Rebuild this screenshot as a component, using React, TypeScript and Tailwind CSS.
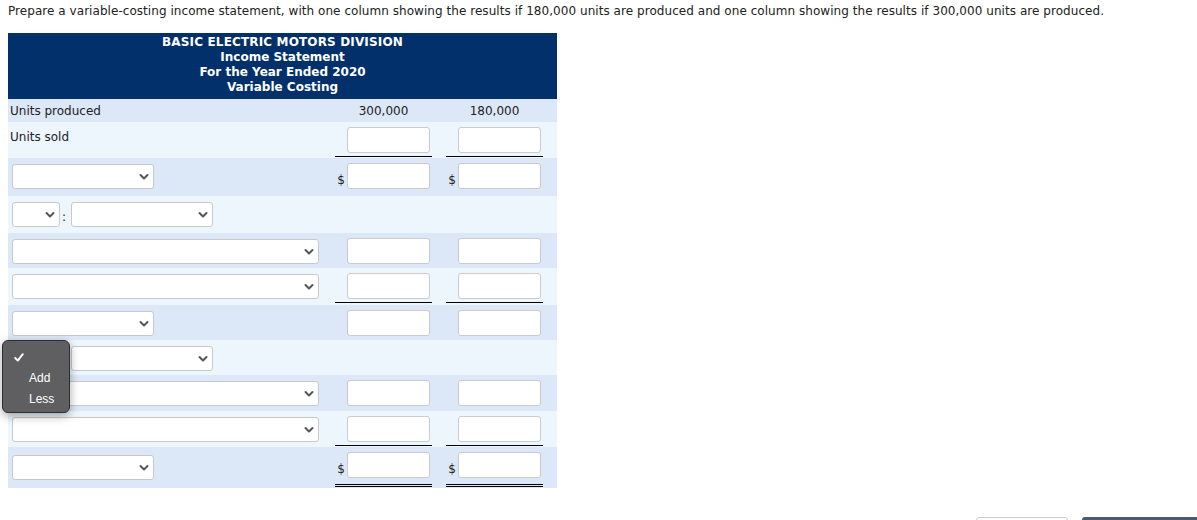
import React from "react";

type Line = "none" | "single" | "double";

function Chevron() {
  return (
    <svg width="10" height="7" viewBox="0 0 10 7" className="absolute right-[4px] top-1/2 -translate-y-1/2">
      <path d="M1.5 1.5 L5 5 L8.5 1.5" fill="none" stroke="#555" strokeWidth="2" strokeLinecap="round" strokeLinejoin="round" />
    </svg>
  );
}

function Select({ w }: { w: string }) {
  return (
    <div className={`relative h-[25px] mt-[1px] bg-white border border-[#c9c9c9] rounded-[3px] ${w}`}>
      <Chevron />
    </div>
  );
}

function Amount({ dollar, line = "none" }: { dollar?: boolean; line?: Line }) {
  const lineCls =
    line === "single"
      ? "border-b border-black pb-[3px]"
      : line === "double"
      ? "border-b-[3px] border-double border-black pb-[6px]"
      : "";
  return (
    <div className={`w-[97px] flex items-end justify-end pr-[2px] ${lineCls}`}>
      {dollar && <span className="mr-[2px] leading-[18px]">$</span>}
      <div className="w-[83px] h-[26px] bg-white border border-[#cbcbcb] rounded-[3px]" />
    </div>
  );
}

function Row({
  dark,
  label,
  amounts,
  dollar,
  line,
  h = "h-[36px]",
  top,
  children,
}: {
  dark?: boolean;
  label?: React.ReactNode;
  amounts?: boolean;
  dollar?: boolean;
  line?: Line;
  h?: string;
  top?: boolean;
  children?: React.ReactNode;
}) {
  return (
    <div
      className={`relative grid grid-cols-[327px_111px_111px] pt-[5px] ${h} ${top ? "z-10" : ""} ${
        dark ? "bg-[#dce8f7]" : "bg-[#edf5fd]"
      }`}
    >
      <div className="pl-[4px] flex items-start">
        {label ? <span className="-ml-[2px] leading-[21px]">{label}</span> : children}
      </div>
      <div>{amounts && <Amount dollar={dollar} line={line} />}</div>
      <div>{amounts && <Amount dollar={dollar} line={line} />}</div>
    </div>
  );
}

function Pair() {
  return (
    <div className="flex items-start">
      <Select w="w-[48px]" />
      <span className="w-[11px] pl-[2px] leading-[32px]">:</span>
      <Select w="w-[142px]" />
    </div>
  );
}

export default function App() {
  return (
    <div className="bg-white min-h-[520px] text-[12px] text-[#222]" style={{ fontFamily: '"DejaVu Sans", Verdana, sans-serif' }}>
      <div className="pl-[8px] pt-[4px]">
        <p className="leading-[15px] tracking-[0.05px]">
          Prepare a variable-costing income statement, with one column showing the results if 180,000 units are produced and one column showing the results if 300,000 units are produced.
        </p>

        <div className="mt-[14px] w-[549px]">
          <div className="bg-[#01306a] text-white font-bold text-center leading-[15px] pt-[2px] pb-[4px]">
            <div className="tracking-[0.15px]">BASIC ELECTRIC MOTORS DIVISION</div>
            <div>Income Statement</div>
            <div>For the Year Ended 2020</div>
            <div>Variable Costing</div>
          </div>

          <div className="grid grid-cols-[327px_111px_111px] h-[23px] items-center bg-[#dce8f7]">
            <span className="pl-[2px]">Units produced</span>
            <span className="w-[97px] text-center">300,000</span>
            <span className="w-[97px] text-center">180,000</span>
          </div>

          <Row label="Units sold" amounts line="single" />
          <Row dark amounts dollar h="h-[38px]">
            <Select w="w-[142px]" />
          </Row>
          <Row h="h-[37px]">
            <Pair />
          </Row>
          <Row dark amounts h="h-[35px]">
            <Select w="w-[307px]" />
          </Row>
          <Row amounts line="single" h="h-[37px]">
            <Select w="w-[307px]" />
          </Row>
          <Row dark amounts h="h-[35px]">
            <Select w="w-[142px]" />
          </Row>
          <Row h="h-[35px]" top>
            <Pair />
            <div
              className="absolute left-[-6px] top-0 w-[68px] h-[73px] rounded-[6px] bg-[#5f5f61] border border-[#2f2f30] shadow-[0_3px_10px_rgba(0,0,0,0.35)] text-white pt-[6px]"
              style={{ fontFamily: '"Liberation Sans", Arial, sans-serif' }}
            >
              <div className="h-[21px] flex items-center pl-[11px]">
                <svg width="10" height="9" viewBox="0 0 10 9">
                  <path d="M1.2 5 L3.8 7.6 L8.8 1.2" fill="none" stroke="#fff" strokeWidth="1.9" strokeLinecap="round" strokeLinejoin="round" />
                </svg>
              </div>
              <div className="h-[21px] leading-[21px] pl-[26px]">Add</div>
              <div className="h-[21px] leading-[21px] pl-[26px]">Less</div>
            </div>
          </Row>
          <Row dark amounts>
            <Select w="w-[307px]" />
          </Row>
          <Row amounts line="single">
            <Select w="w-[307px]" />
          </Row>
          <Row dark amounts dollar line="double" h="h-[41px]">
            <div className="mt-[2px]">
              <Select w="w-[142px]" />
            </div>
          </Row>
        </div>
      </div>

      <div className="mt-[29px] flex justify-end gap-[14px]">
        <div className="w-[92px] h-[36px] border border-[#c9cdd2] rounded-[3px] bg-white" />
        <div className="w-[115px] h-[36px] rounded-l-[3px] bg-[#4b5b70]" />
      </div>
    </div>
  );
}
